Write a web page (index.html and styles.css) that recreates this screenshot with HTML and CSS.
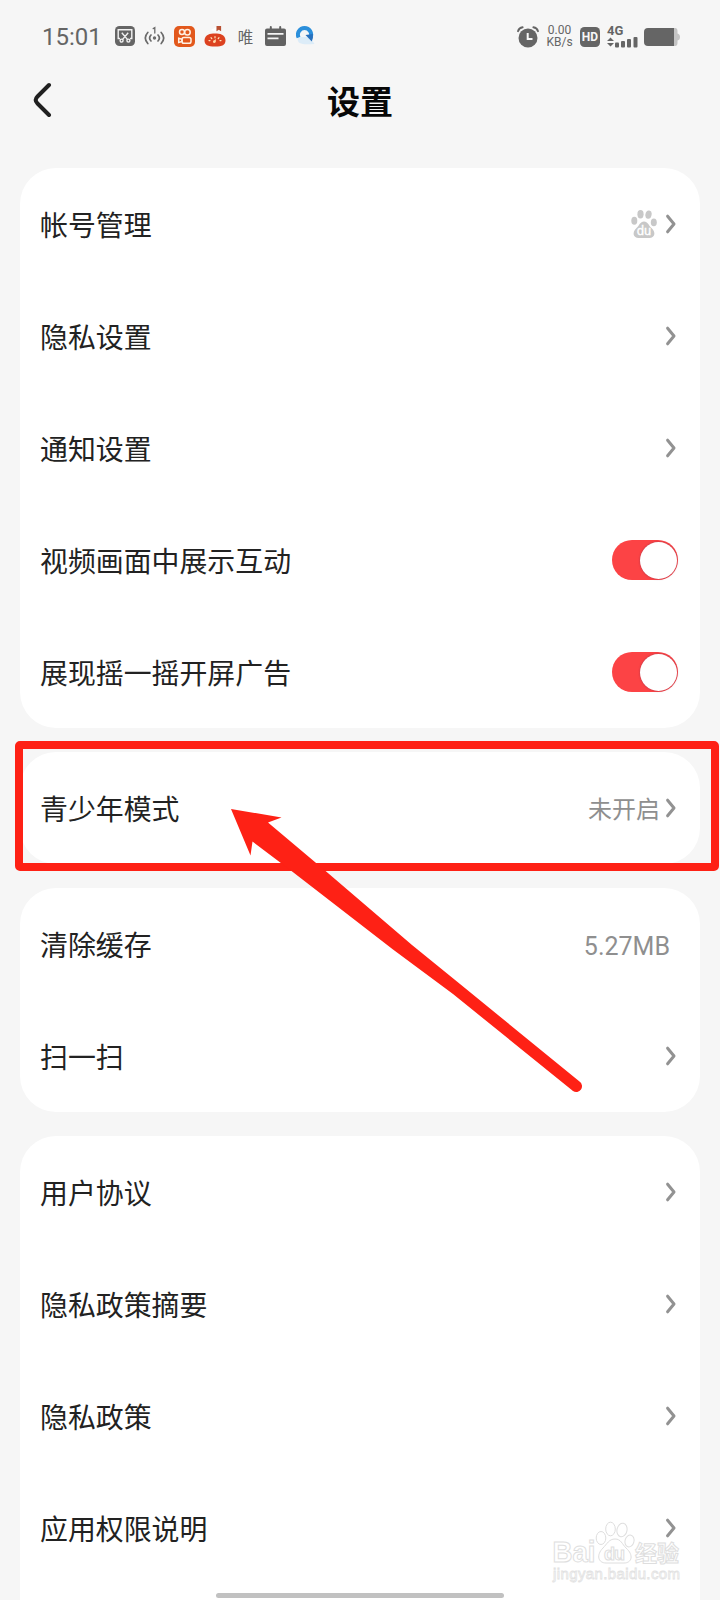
FILE: index.html
```html
<!DOCTYPE html>
<html lang="zh-CN">
<head>
<meta charset="utf-8">
<title>设置</title>
<link rel="stylesheet" href="styles.css">
</head>
<body>
<svg class="defs" aria-hidden="true">
  <symbol id="chevron" viewBox="0 0 12 20"><path d="M2.6 2.2 9 10 2.6 17.8" fill="none" stroke="#929292" stroke-width="3" stroke-linecap="round" stroke-linejoin="round"/></symbol>
</svg>
<div class="screen">
  <header class="status">
    <span class="clock">15:01</span>
    <div class="status-left">
      <svg width="20" height="20" viewBox="0 0 20 20"><rect width="20" height="20" rx="4.5" fill="#656565"/><g fill="none" stroke="#f2f2f2" stroke-width="1.4"><path d="M5 12.500H3.200V3.800h13.600v8.700H15M6.800 6.800l5.600 6.600M13.200 6.800l-5.600 6.600"/><circle cx="6.600" cy="14.600" r="1.500"/><circle cx="13.400" cy="14.600" r="1.500"/></g></svg>
      <svg width="21" height="20" viewBox="0 0 21 20"><g fill="none" stroke="#6b6b6b" stroke-width="1.700" stroke-linecap="round"><path d="M3.800 6.500Q-1.200 12 3.800 17.500M7 9q-2.800 3 0 6M17.200 6.500q5 5.500 0 11M14 9q2.800 3 0 6"/><path d="M9.200 2.600l1.600-1V7" stroke-width="1.300"/></g><circle cx="10.500" cy="12" r="1.700" fill="#6b6b6b"/></svg>
      <svg width="21" height="21" viewBox="0 0 21 21"><rect width="21" height="21" rx="5" fill="#e2581c"/><g fill="none" stroke="#fff1e4" stroke-width="1.500"><circle cx="8" cy="6" r="2.500"/><circle cx="13.400" cy="6.300" r="2.800"/><rect x="8" y="11.400" width="9" height="5.800" rx="1.800"/><path d="M8 13.200l-3.300-1v4.300l3.300-1z"/></g></svg>
      <svg width="22" height="21" viewBox="0 0 22 21"><path d="M2 7Q6 2 12 6V1" fill="#fff"/><path d="M12.500 0h4.600v5.200l-2.300-1.400-2.300 1.400z" fill="#b95032"/><path d="M.5 14C1 8.500 6 7.500 11 7.500S21 8.500 21.500 14c0 5-3 6.500-10.500 6.500S.5 19 .5 14z" fill="#dc4220"/><g stroke="#ffe4bc" stroke-width="1.200" stroke-linecap="round"><path d="M11 10.500v1.300M7 11.600l.8 1M15 11.600l-.8 1M5 14.600h1M16 14.600h1M10 16l1.400-2"/></g><circle cx="10.400" cy="15.600" r="1.400" fill="#ffd9a5"/></svg>
      <span class="wei">唯</span>
      <svg width="21" height="20" viewBox="0 0 21 20"><path d="M2 2.500h2.800V1q0-1 1-1t1 1v1.500h7.400V1q0-1 1-1t1 1v1.500H19q2 0 2 2V18q0 2-2 2H2q-2 0-2-2V4.500q0-2 2-2z" fill="#626262"/><path d="M2.500 7.800h16M2.500 12.300h11" stroke="#f4f4f4" stroke-width="1.700"/></svg>
      <svg class="browser" width="20" height="20" viewBox="0 0 20 20"><path d="M2 11C0 19 8 18.500 18.500 18L14 11z" fill="#dcecf8"/><path d="M2.600 11.500A6.600 6.600 0 1 1 14.500 11.500" fill="none" stroke="#2b8fdb" stroke-width="4"/><path d="M9.500 9l7.300-1q.6 4-1 7.500z" fill="#2871bd"/></svg>
    </div>
    <div class="status-right">
      <svg width="22" height="22" viewBox="0 0 22 22"><circle cx="11" cy="12" r="9.500" fill="#656565"/><path d="M1 5.200Q2 2 5.600 1.300M21 5.200Q20 2 16.400 1.300" fill="none" stroke="#656565" stroke-width="1.900" stroke-linecap="round"/><path d="M10.700 7v6h4.800" fill="none" stroke="#f7f7f7" stroke-width="2"/></svg>
      <span class="speed"><span>0.00</span><span>KB/s</span></span>
      <span class="hd">HD</span>
      <span class="signal"><b>4G</b><svg width="31" height="12" viewBox="0 0 31 12" fill="#656565"><path d="M0 5 3.500 1.500 7 5zM0 7h7L3.500 10.500z"/><rect x="8" y="6.500" width="4" height="5" rx="1"/><rect x="14" y="5" width="4" height="6.500" rx="1"/><rect x="20" y="3" width="4" height="8.500" rx="1"/><rect x="26.500" y="1" width="4" height="10.500" rx="1"/></svg></span>
      <svg class="battery" width="36" height="18" viewBox="0 0 36 18"><path d="M28 0h3q2.500 0 2.500 3v2.500Q36 6 36 9t-2.500 3.500V15q0 3-2.500 3h-3z" fill="#c4c4c4"/><path d="M4 0h26v18H4q-4 0-4-4V4q0-4 4-4z" fill="#656565"/></svg>
    </div>
  </header>
  <nav class="title-bar">
    <svg class="back" width="20" height="36" viewBox="0 0 20 36"><path d="M17 3 5.500 14.500Q2 18 5.500 21.500L17 33" fill="none" stroke="#202020" stroke-width="4" stroke-linecap="round"/></svg>
    <h1>设置</h1>
  </nav>
  <main class="groups">
    <section class="card">
      <div class="row"><span>帐号管理</span><div class="end"><svg class="paw" width="26" height="28" viewBox="0 0 26 28"><g fill="#c8c8c8"><ellipse cx="3.300" cy="10.800" rx="3" ry="4"/><ellipse cx="9.500" cy="4.300" rx="3.100" ry="4.200"/><ellipse cx="17.500" cy="4.600" rx="3.100" ry="4.200" transform="rotate(12 17.500 4.600)"/><ellipse cx="22.800" cy="12.400" rx="3" ry="3.800"/><path d="M13 11.500c4 0 4.500 4 7.500 6.500 5 4.500 3 10-2 10h-11c-5 0-7-5.500-2-10 3-2.500 3.500-6.500 7.500-6.500z"/></g><text x="13" y="25.300" class="paw-text">du</text></svg><svg class="chev"><use href="#chevron"/></svg></div></div>
      <div class="row"><span>隐私设置</span><svg class="chev"><use href="#chevron"/></svg></div>
      <div class="row"><span>通知设置</span><svg class="chev"><use href="#chevron"/></svg></div>
      <div class="row"><span>视频画面中展示互动</span><span class="switch"></span></div>
      <div class="row"><span>展现摇一摇开屏广告</span><span class="switch"></span></div>
    </section>
    <section class="card">
      <div class="row"><span>青少年模式</span><div class="end"><span class="value">未开启</span><svg class="chev"><use href="#chevron"/></svg></div></div>
    </section>
    <section class="card">
      <div class="row"><span>清除缓存</span><span class="value size">5.27MB</span></div>
      <div class="row"><span>扫一扫</span><svg class="chev"><use href="#chevron"/></svg></div>
    </section>
    <section class="card last">
      <div class="row"><span>用户协议</span><svg class="chev"><use href="#chevron"/></svg></div>
      <div class="row"><span>隐私政策摘要</span><svg class="chev"><use href="#chevron"/></svg></div>
      <div class="row"><span>隐私政策</span><svg class="chev"><use href="#chevron"/></svg></div>
      <div class="row"><span>应用权限说明</span><svg class="chev"><use href="#chevron"/></svg></div>
    </section>
  </main>
  <div class="highlight"></div>
  <svg class="arrow" width="360" height="290" viewBox="225 805 360 290"><path d="M231 809 281.500 817.500 268 822.500 325 870.500 412 945 460 984 579.500 1081.500A5.500 5.500 0 0 1 573 1091L453 994 393 949.500 291.500 871 252.500 841.500 250.500 855.500z" fill="#fe2115"/></svg>
  <svg class="watermark" width="134" height="66" viewBox="550 1520 134 66">
    <g fill="#fff" stroke="#dedede" stroke-width="1">
      <ellipse cx="601" cy="1538" rx="4.800" ry="6.500"/><ellipse cx="610.500" cy="1529" rx="4.800" ry="6.800"/><ellipse cx="622" cy="1530" rx="5" ry="6.800" transform="rotate(12 622 1530)"/><ellipse cx="629.500" cy="1541" rx="4.500" ry="6" transform="rotate(15 629.500 1541)"/>
      <path d="M615 1539c6 0 7 5 11 9 8 7 6 15-2 15h-18c-8 0-10-8-3-15 4-4 6-9 12-9z"/>
      <text class="wm-brand" x="552.500" y="1562" textLength="43" lengthAdjust="spacingAndGlyphs">Bai</text><text class="wm-du" x="604" y="1560" textLength="21">du</text><text class="wm-cn" x="635" y="1561">经验</text>
    </g>
    <text class="wm-url" x="553" y="1579" textLength="127">jingyan.baidu.com</text>
  </svg>
  <div class="home-bar"></div>
</div>
</body>
</html>
```
FILE: styles.css
```css
* { box-sizing: border-box; }
body { margin: 0; background: #f6f6f6; font-family: "Noto Sans CJK SC", sans-serif; color: #222; }
.defs { position: absolute; width: 0; height: 0; }
.screen { position: relative; width: 720px; height: 1600px; overflow: hidden; background: #f6f6f6; }
.status { height: 70px; padding: 0 40px 0 42px; display: flex; align-items: center; color: #656565; }
.clock { width: 73px; font: 24px/30px Roboto, sans-serif; padding-top: 4px; }
.status-left { display: flex; align-items: center; gap: 9px; padding-top: 2px; }
.status svg { display: block; flex: none; }
.wei { width: 21px; font-size: 15.500px; line-height: 22px; text-align: center; }
.browser { margin-left: 1px; }
.status-right { margin-left: auto; display: flex; align-items: center; padding-top: 3px; }
.speed { display: flex; flex-direction: column; width: 25px; margin: 0 8px 0 8px; font: 12px/11.500px Roboto, sans-serif; align-items: center; }
.hd { width: 20px; height: 20px; border-radius: 4.5px; background: #656565; color: #f7f7f7; font: bold 12px/20px Roboto, sans-serif; text-align: center; }
.signal { width: 31px; margin: 0 6px 0 7px; display: flex; flex-direction: column; font: 13px/11px Roboto, sans-serif; }
.title-bar { height: 98px; padding: 12px 32px 0; display: grid; grid-template-columns: 20px 1fr 20px; align-items: start; }
.title-bar h1 { margin: -2px 0 0; font-size: 33px; line-height: 40px; font-weight: 700; color: #080808; text-align: center; }
.groups { display: flex; flex-direction: column; gap: 24px; padding: 0 20px; }
.card { background: #fff; border-radius: 36px; }
.card.last { border-radius: 36px 36px 0 0; height: 464px; }
.row { height: 112px; padding: 0 22px 0 20px; display: flex; align-items: center; justify-content: space-between; font-size: 27.9px; line-height: 40px; }
.end { display: flex; align-items: center; }
.chev { width: 12px; height: 20px; display: block; margin-right: 1px; }
.paw { margin-right: 8px; }
.paw-text { font: 13px Roboto, sans-serif; fill: #fff; stroke: #fff; stroke-width: .3px; text-anchor: middle; }
.value { color: #8f8f8f; font-size: 24px; margin-right: 5px; }
.size { font: 25px/40px Roboto, sans-serif; margin-right: 8px; padding-top: 5px; }
.switch { width: 66px; height: 40px; border-radius: 20px; background: #fc4345; display: flex; justify-content: flex-end; padding: 1.5px; }
.switch::after { content: ""; width: 37px; height: 37px; border-radius: 50%; background: #fff; box-shadow: 0 0 2px rgba(80, 40, 80, .5); }
.highlight { position: absolute; left: 15px; top: 741px; width: 704px; height: 130px; border: 8.500px solid #fe2115; border-radius: 5px; }
.arrow { position: absolute; left: 225px; top: 805px; }
.watermark { position: absolute; left: 550px; top: 1520px; }
.wm-brand { font: bold 29px "Liberation Sans", sans-serif; }
.wm-du { font: bold 18px "Liberation Sans", sans-serif; }
.wm-cn { font: bold 22px "Noto Sans CJK SC", sans-serif; }
.wm-url { font: 15px "Liberation Sans", sans-serif; fill: #fff; stroke: #e2e2e2; stroke-width: .8px; }
.home-bar { position: absolute; left: 216px; top: 1593px; width: 288px; height: 5px; border-radius: 3px; background: #c1c1c1; }
```
